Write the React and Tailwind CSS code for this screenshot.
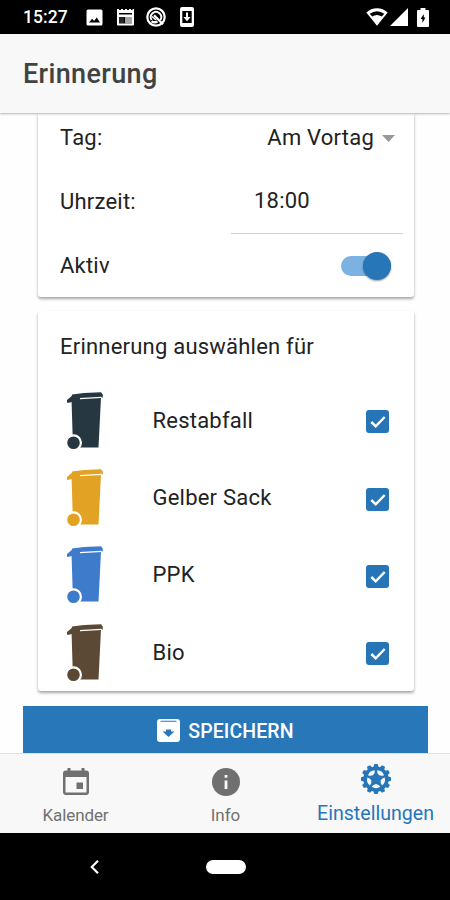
import { useState } from 'react';

const BINS = [
    { name: 'Restabfall', color: '#273742' },
    { name: 'Gelber Sack', color: '#e2a224' },
    { name: 'PPK', color: '#3e7ccb' },
    { name: 'Bio', color: '#5c4935' },
];

const StatusBar = () => (
    <div className="h-[34px] shrink-0 bg-black text-white flex items-center pl-[23px] pr-[21px]">
        <span className="text-[17.500px] leading-none font-medium tracking-[0.100px] w-[63px] pt-[2px]">15:27</span>
        <svg className="w-[17px] h-[17px]" viewBox="0 0 17 17" fill="currentColor">
            <path fillRule="evenodd" d="M2 0.5h13a1.500 1.500 0 0 1 1.500 1.500v13a1.500 1.500 0 0 1-1.500 1.500H2A1.500 1.500 0 0 1 .5 15V2A1.500 1.500 0 0 1 2 .5zM3 13.500h11l-3.300-5-2.600 3.500-2-2.200z" />
        </svg>
        <svg className="w-[19px] h-[18px] ml-[13px]" viewBox="0 0 19 18">
            <path fill="currentColor" fillRule="evenodd" d="M1 1h2v1h2V1h2v1h2V1h2v1h2V1h2v1h1.500V1H18v15.500a1 1 0 0 1-1 1H2a1 1 0 0 1-1-1zM3 5v1.500h13V5zM3 9v6.500h13V9z" />
            <path fill="currentColor" d="M3 9h5v6.500H3z" opacity="0.15" />
            <path fill="currentColor" d="M9 9h7v6.500H9z" opacity="0.65" />
        </svg>
        <svg className="w-[20px] h-[20px] ml-[11px]" viewBox="0 0 20 20" fill="none" stroke="currentColor">
            <circle cx="10" cy="10" r="8.700" strokeWidth="2.200" />
            <path d="M5.600 13a5.200 5.200 0 1 1 8.800 0" strokeWidth="1.900" />
            <path d="M8 8.300l9 9M5.500 14.200q3 2 6 .3" strokeWidth="2.300" />
            <path d="M6 9.500l4 3.500" strokeWidth="1.500" />
        </svg>
        <svg className="w-[14px] h-[20px] ml-[14px]" viewBox="0 0 14 20" fill="currentColor">
            <path fillRule="evenodd" d="M2 0h10a2 2 0 0 1 2 2v16a2 2 0 0 1-2 2H2a2 2 0 0 1-2-2V2a2 2 0 0 1 2-2zM2.300 4v12h9.400V4z" />
            <path d="M6 5.500h2v4.500h2.600L7 14.300 3.400 10H6z" />
        </svg>
        <svg className="w-[22px] h-[18px] ml-auto" viewBox="0 0 22 18">
            <path fill="currentColor" d="M11 .3c4.200 0 7.600 1.500 10.700 4.200L11 17.800.3 4.500C3.400 1.800 6.800.3 11 .3z" />
            <path d="M3.700 5.700Q11 .6 18.300 5.700L15.800 8.600Q11 5.600 6.200 8.600z" fill="#000" />
        </svg>
        <svg className="w-[18px] h-[18px] ml-[2px]" viewBox="0 0 18 18" fill="currentColor">
            <path d="M18 0v18H0z" />
        </svg>
        <svg className="w-[12px] h-[19px] ml-[9px]" viewBox="0 0 12 19">
            <path fill="currentColor" d="M3.500 0h5v2H11a1 1 0 0 1 1 1v15a1 1 0 0 1-1 1H1a1 1 0 0 1-1-1V3a1 1 0 0 1 1-1h2.500z" />
            <path fill="#000" d="M6.800 6v3.600h1.700L5.400 15v-3.900H3.600z" />
        </svg>
    </div>
);

const BinIcon = ({ color }) => (
    <svg className="w-[36px] h-[58px]" viewBox="0 0 36 58" fill={color}>
        <path d="M4.700 4L5 2.500 17 1 34.200.3l.8 1.500.8.700V5.500H34L31.500 55.500H6L4.600 10 2 10.700H0V8z" />
        <path d="M13 6.700l21.500-1.400" stroke="#fff" strokeWidth="1.300" />
        <circle cx="6.500" cy="50.700" r="7.400" stroke="#fff" strokeWidth="2.200" />
    </svg>
);

const Checkbox = ({ checked, onChange }) => (
    <button
        role="checkbox"
        aria-checked={checked}
        onClick={onChange}
        className={`w-[23px] h-[23px] mt-[2px] rounded-[3px] ${checked ? 'bg-[#2575b7]' : 'border-2 border-gray-500'}`}
    >
        {checked && (
            <svg className="w-[23px] h-[23px]" viewBox="0 0 23 23" fill="none" stroke="#fff" strokeWidth="2.500">
                <path d="M5.300 12l4.400 4.300 9-9.300" />
            </svg>
        )}
    </button>
);

// Cog wheel with twelve teeth and five openings around a star-shaped hub
const CogIcon = () => {
    const teeth = Array.from({ length: 12 }, (_, i) => i * 30);
    const holes = Array.from({ length: 5 }, (_, i) => i * 72 + 36);
    return (
        <svg className="w-[30px] h-[30px]" viewBox="-15 -15 30 30" fill="currentColor">
            <circle r="12.600" />
            {teeth.map((a) => (
                <path key={a} d="M-2.700-11.500L-1.700-15h3.400l1 3.500z" transform={`rotate(${a})`} />
            ))}
            {holes.map((a) => (
                <path key={a} fill="#f8f8f8" d="M-4.200-7.800Q0-10.600 4.200-7.800Q3-5.300 0-4.900Q-3-5.300-4.200-7.800z" transform={`rotate(${a})`} />
            ))}
        </svg>
    );
};

const App = () => {
    const [active, setActive] = useState(true);
    const [selected, setSelected] = useState(BINS.map(() => true));

    const toggle = (idx) => setSelected(selected.map((s, i) => (i === idx ? !s : s)));

    return (
        <div className="w-[450px] h-[900px] flex flex-col overflow-hidden bg-white font-[Roboto,sans-serif] text-[#222]">
            <StatusBar />

            {/* Header */}
            <header className="relative z-10 h-[79px] shrink-0 bg-[#f8f8f8] flex items-center pl-[23px] pt-px shadow-[0_1px_2px_rgba(0,0,0,0.3)]">
                <h1 className="text-[27px] leading-none font-medium tracking-[0.350px] text-[#424242]">Erinnerung</h1>
            </header>

            <main className="h-[640px] shrink-0 overflow-hidden bg-[#fefefe] flex flex-col text-[22px] leading-[26px] tracking-[0.220px]">
                {/* Time settings */}
                <section className="ml-[38px] mr-[36px] h-[184px] shrink-0 bg-white rounded-b-[3px] shadow-[0_2px_3px_rgba(0,0,0,0.35)] pl-[22px] pr-[11px]">
                    <div className="h-[56px] flex items-start justify-between pt-[12px]">
                        <span>Tag:</span>
                        <span className="flex items-center gap-[8px] pr-[8px]">
                            Am Vortag
                            <svg className="w-[13px] h-[7px]" viewBox="0 0 13 7" fill="#999">
                                <path d="M0 0h13L6.500 7z" />
                            </svg>
                        </span>
                    </div>
                    <div className="h-[65px] flex justify-between">
                        <span className="pt-[20px]">Uhrzeit:</span>
                        <span className="w-[172px] pl-[23px] pt-[19px] border-b border-[#d2d2d2]">18:00</span>
                    </div>
                    <div className="h-[63px] flex items-center justify-between pr-[12px]">
                        <span>Aktiv</span>
                        <button
                            role="switch"
                            aria-checked={active}
                            onClick={() => setActive(!active)}
                            className={`w-[50px] h-[20px] rounded-full flex items-center ${active ? 'bg-[#7bb2e2] justify-end' : 'bg-gray-300 justify-start'}`}
                        >
                            <span className="w-[28px] h-[28px] rounded-full bg-[#2676b8] shadow-[0_1px_2px_rgba(0,0,0,0.4)]" />
                        </button>
                    </div>
                </section>

                {/* Bin selection */}
                <section className="ml-[38px] mr-[36px] mt-[14px] h-[380px] shrink-0 bg-white rounded-[3px] shadow-[0_2px_3px_rgba(0,0,0,0.35)] pl-[29px] pr-[25px]">
                    <h2 className="h-[71px] pt-[23px] -ml-[7px]">Erinnerung auswählen für</h2>
                    {BINS.map((bin, idx) => (
                        <div key={bin.name} className="h-[77.400px] flex items-center">
                            <BinIcon color={bin.color} />
                            <span className="ml-[49.500px] flex-1">{bin.name}</span>
                            <Checkbox checked={selected[idx]} onChange={() => toggle(idx)} />
                        </div>
                    ))}
                </section>

                <button className="ml-[23px] mr-[22px] mt-[15px] h-[60px] shrink-0 bg-[#2777b9] text-white flex justify-center pt-[12px] gap-[8px] text-[19.500px] font-medium tracking-[0.100px]">
                    <svg className="w-[23px] h-[23px] mt-[1px]" viewBox="0 0 23 23">
                        <path fill="#fff" d="M3 0h17a3 3 0 0 1 3 3v17a3 3 0 0 1-3 3H3a3 3 0 0 1-3-3V3a3 3 0 0 1 3-3z" />
                        <path fill="#2777b9" d="M4 1.800h15l.8 1H3.200zM9 10.500h5v2h3.500L11.500 18 5.500 12.500H9z" />
                    </svg>
                    <span className="pt-px">SPEICHERN</span>
                </button>
            </main>

            {/* Tab bar */}
            <nav className="relative z-10 h-[80px] shrink-0 bg-[#f8f8f8] border-t border-[#e0e0e0] grid grid-cols-3 text-[#707070] text-[17px] leading-[22px]">
                <div className="flex flex-col items-center pt-[14px] pl-px">
                    <svg className="w-[26px] h-[27px]" viewBox="0 0 26 27" fill="currentColor">
                        <path fillRule="evenodd" d="M4.500 0h3v2.500h11V0h3v2.500H23a3 3 0 0 1 3 3V24a3 3 0 0 1-3 3H3a3 3 0 0 1-3-3V5.500a3 3 0 0 1 3-3h1.500zM2.500 9v15.500h21V9z" />
                        <path d="M13.500 14.500H20V21h-6.500z" />
                    </svg>
                    <span className="mt-[9px] tracking-[-0.100px]">Kalender</span>
                </div>
                <div className="flex flex-col items-center pt-[14px] pl-px">
                    <svg className="w-[28px] h-[28px]" viewBox="0 0 28 28">
                        <circle cx="14" cy="14" r="14" fill="currentColor" />
                        <path fill="#f8f8f8" d="M12.600 7h2.800v2.800h-2.800zM12.600 12.500h2.800V21h-2.800z" />
                    </svg>
                    <span className="mt-[8px]">Info</span>
                </div>
                <div className="flex flex-col items-center pt-[10px] pl-px text-[#2676b8]">
                    <CogIcon />
                    <span className="mt-[9px] text-[19.600px]">Einstellungen</span>
                </div>
            </nav>

            {/* System navigation */}
            <div className="h-[67px] shrink-0 bg-black grid grid-cols-3">
                <div className="flex items-center pl-[90px]">
                    <svg className="w-[9px] h-[14px]" viewBox="0 0 9 14" fill="none" stroke="#fff" strokeWidth="2.200">
                        <path d="M8 .8L1.800 7 8 13.200" />
                    </svg>
                </div>
                <div className="flex items-center justify-center pl-px">
                    <span className="w-[40px] h-[14px] rounded-full bg-white" />
                </div>
            </div>
        </div>
    );
};

export default App;
